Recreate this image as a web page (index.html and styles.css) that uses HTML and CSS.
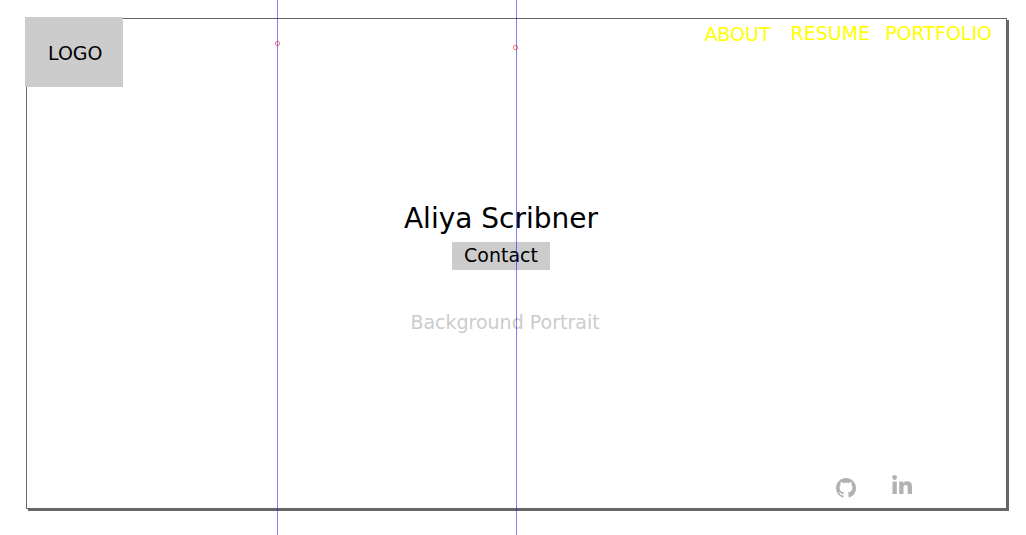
FILE: index.html
```html
<!DOCTYPE html>
<html lang="en">
<head>
<meta charset="utf-8">
<title>Aliya Scribner</title>
<link rel="stylesheet" href="styles.css">
</head>
<body>
<div class="page">
  <div class="frame">
    <header class="header">
      <a class="logo" href="#">LOGO</a>
      <nav class="nav">
        <a class="nav-link nav-about" href="#about">ABOUT</a>
        <a class="nav-link" href="#resume">RESUME</a>
        <a class="nav-link" href="#portfolio">PORTFOLIO</a>
      </nav>
    </header>
    <main class="hero">
      <h1 class="name">Aliya Scribner</h1>
      <button class="contact" type="button">Contact</button>
      <p class="caption">Background Portrait</p>
    </main>
    <footer class="social">
      <a class="social-link social-github" href="#github" aria-label="GitHub">
        <svg class="icon" viewBox="0 0 16 16"><path d="M8 0C3.580 0 0 3.580 0 8c0 3.540 2.290 6.530 5.470 7.590.4.070.550-.170.550-.380 0-.190-.010-.820-.010-1.490-2.010.370-2.530-.490-2.690-.940-.090-.230-.480-.940-.820-1.130-.280-.150-.680-.520-.010-.530.630-.010 1.080.580 1.230.820.720 1.210 1.870.870 2.330.660.070-.520.280-.870.510-1.070-1.780-.2-3.640-.890-3.640-3.950 0-.870.310-1.590.820-2.150-.080-.2-.360-1.020.080-2.120 0 0 .670-.210 2.200.820.640-.180 1.320-.270 2-.270s1.360.090 2 .270c1.530-1.040 2.200-.820 2.200-.820.440 1.100.160 1.920.080 2.120.510.560.820 1.270.820 2.150 0 3.070-1.870 3.750-3.650 3.950.290.250.540.730.540 1.480 0 1.070-.010 1.930-.010 2.200 0 .210.150.460.550.380A8.010 8.010 0 0 0 16 8c0-4.420-3.580-8-8-8z"/></svg>
      </a>
      <a class="social-link" href="#linkedin" aria-label="LinkedIn">
        <svg class="icon" viewBox="0 0 20 20"><circle cx="2.600" cy="2.500" r="2.400"/><path d="M.5 6.500h4.300V19H.5zM7.200 6.500h4v1.700c.6-1.100 1.900-2 3.900-2 4 0 4.900 2.600 4.900 6V19h-4.300v-6c0-1.500 0-3.100-2-3.100s-2.200 1.500-2.200 3V19H7.200z"/></svg>
      </a>
    </footer>
  </div>
  <span class="guide guide-quarter"></span>
  <span class="guide guide-center"></span>
</div>
</body>
</html>
```

FILE: styles.css
```css
*, *::after { box-sizing: border-box; }
body {
  margin: 0;
  background: #fff;
  color: #000;
  font-family: "DejaVu Sans", sans-serif;
  font-size: 19px;
  line-height: 24px;
}
a { color: inherit; text-decoration: none; }
.page {
  position: relative;
  display: flex;
  min-height: 100vh;
  padding: 18px 19px 26px 26px;
}
.frame {
  flex: 1;
  display: flex;
  flex-direction: column;
  border: 1px solid #666;
  box-shadow: 2px 2px 0 #666;
}
.header {
  display: flex;
  justify-content: space-between;
  align-items: flex-start;
}
.logo {
  margin: -2px 0 0 -2px;
  padding: 24px 20px 22px 23px;
  background: #ccc;
}
.nav {
  display: flex;
  gap: 15px;
  padding: 2px 14px 0 0;
}
.nav-link { color: #ff0; }
.nav-about { margin-right: 5px; padding-top: 1px; }
.hero {
  flex: 1;
  display: flex;
  flex-direction: column;
  align-items: center;
  padding: 114px 31px 0 0;
}
.name {
  margin: 0;
  font-size: 28px;
  font-weight: 400;
  line-height: 36px;
}
.contact {
  min-width: 98px;
  margin-top: 5px;
  padding: 0 11px 2px;
  border: 0;
  background: #ccc;
  color: #000;
  font: inherit;
  line-height: 26px;
}
.caption {
  margin: 40px 0 0;
  padding-left: 8px;
  color: #ccc;
}
.social {
  display: flex;
  justify-content: flex-end;
  align-items: flex-start;
  gap: 36px;
  padding: 0 94px 10px 0;
}
.social-link { display: flex; color: #b2b2b2; }
.social-github { padding-top: 3px; }
.icon { width: 20px; height: 20px; fill: currentColor; }
.guide {
  position: absolute;
  top: 0;
  bottom: 0;
  width: 1px;
  background: rgba(0, 0, 255, .5);
}
.guide::after {
  content: "";
  position: absolute;
  left: -2px;
  width: 5px;
  height: 5px;
  border: 1px solid rgba(255, 0, 0, .5);
  border-radius: 2px;
}
.guide-quarter { left: 27%; }
.guide-quarter::after { top: 41px; }
.guide-center { left: 516px; }
.guide-center::after { top: 45px; left: -3px; }
```
